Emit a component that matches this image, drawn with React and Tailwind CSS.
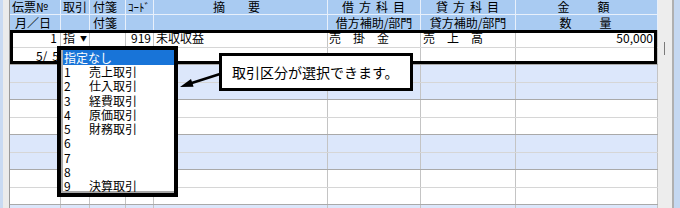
import React from 'react';

const W = [51, 29, 36, 28, 174, 93, 95, 142];

const items = [
  ['1', '売上取引'],
  ['2', '仕入取引'],
  ['3', '経費取引'],
  ['4', '原価取引'],
  ['5', '財務取引'],
  ['6', ''],
  ['7', ''],
  ['8', ''],
  ['9', '決算取引'],
];

function Cell({ w, className = '', children }) {
  return (
    <div style={{ width: w }} className={`shrink-0 h-full flex items-center border-r border-[#c4c4c4] overflow-hidden whitespace-nowrap ${className}`}>
      {children}
    </div>
  );
}

function HeadCell({ w, className = '', children }) {
  return (
    <div style={{ width: w }} className={`shrink-0 h-full flex items-center border-r border-[#e8f0fb] whitespace-nowrap ${className}`}>
      {children}
    </div>
  );
}

function Record({ blue, first }) {
  const bg = blue ? 'bg-[#dce7fb]' : 'bg-white';
  return (
    <div className={bg}>
      <div className="h-[17.5px] flex border-b border-[#d6d6d6]">
        <Cell w={W[0]} className="justify-end pr-[3px]">{first ? '1' : ''}</Cell>
        <Cell w={W[1]} className="pl-[2px] gap-[5px]">
          {first ? (<><span>指</span><span className="text-[7px]">▼</span></>) : ''}
        </Cell>
        <Cell w={W[2]} />
        <Cell w={W[3]} className="justify-end pr-[2px]">{first ? '919' : ''}</Cell>
        <Cell w={W[4]} className="pl-[2px]">{first ? '未収収益' : ''}</Cell>
        <Cell w={W[5]} className="pl-[1px]">{first ? '売　掛　金' : ''}</Cell>
        <Cell w={W[6]} className="pl-[2px]">{first ? '売　上　高' : ''}</Cell>
        <Cell w={W[7]} className="justify-end pr-[4px]">{first ? '50,000' : ''}</Cell>
      </div>
      <div className="h-[17.5px] flex border-b border-[#a9a9a9]">
        <Cell w={W[0]} className="justify-end pr-[1px]">
          {first ? (<><span>5/</span><span className="ml-[5px]">5</span></>) : ''}
        </Cell>
        <Cell w={W[1]} />
        <Cell w={W[2]} />
        <Cell w={W[3]} />
        <Cell w={W[4]} />
        <Cell w={W[5]} />
        <Cell w={W[6]} />
        <Cell w={W[7]} />
      </div>
    </div>
  );
}

export default function App() {
  return (
    <div className="relative w-[680px] h-[208px] overflow-hidden flex bg-white text-[12px] leading-none text-black font-['Noto_Sans_CJK_JP','Noto_Sans',sans-serif]">
      <div className="w-[10px] shrink-0 flex">
        <div className="w-[3px] bg-[#c9daf2]" />
        <div className="w-[6px] bg-[#ebebeb]" />
        <div className="w-[1px] bg-[#9a9a9a]" />
      </div>

      <div className="w-[648px] shrink-0 flex flex-col">
        <div className="bg-[#a9cbf2]">
          <div className="h-[15px] flex border-b border-[#e8f0fb]">
            <HeadCell w={W[0]} className="pl-[2px]">伝票№</HeadCell>
            <HeadCell w={W[1]} className="pl-[2px]">取引</HeadCell>
            <HeadCell w={W[2]} className="pl-[3px]">付箋</HeadCell>
            <HeadCell w={W[3]} className="pl-[2px] text-[11px]">ｺｰﾄﾞ</HeadCell>
            <HeadCell w={W[4]} className="justify-center gap-[23px] pr-[8px]"><span>摘</span><span>要</span></HeadCell>
            <HeadCell w={W[5]} className="justify-center tracking-[5px] pl-[4px]">借方科目</HeadCell>
            <HeadCell w={W[6]} className="justify-center tracking-[5px] pl-[4px]">貸方科目</HeadCell>
            <HeadCell w={W[7]} className="justify-center gap-[28px] pr-[6px]"><span>金</span><span>額</span></HeadCell>
          </div>
          <div className="h-[15px] flex">
            <HeadCell w={W[0]} className="pl-[5px]">月／日</HeadCell>
            <HeadCell w={W[1]} />
            <HeadCell w={W[2]} className="pl-[3px]">付箋</HeadCell>
            <HeadCell w={W[3]} />
            <HeadCell w={W[4]} />
            <HeadCell w={W[5]} className="justify-center">借方補助/部門</HeadCell>
            <HeadCell w={W[6]} className="justify-center">貸方補助/部門</HeadCell>
            <HeadCell w={W[7]} className="justify-center gap-[28px] pr-[2px]"><span>数</span><span>量</span></HeadCell>
          </div>
        </div>
        <Record first />
        <Record blue />
        <Record />
        <Record blue />
        <Record />
        <Record blue />
      </div>

      <div className="w-[22px] shrink-0 flex">
        <div className="w-[14px] bg-[#ededed] relative">
          <div className="absolute left-[6px] top-[42px] w-[1px] h-[13px] bg-[#7a7a7a]" />
        </div>
        <div className="w-[2px] bg-[#b0b0b0]" />
        <div className="w-[6px] bg-[#c5d8f1]" />
      </div>

      {/* selected record frame */}
      <div className="absolute left-[10px] top-[30px] w-[647px] h-[34px] border-[3px] border-black pointer-events-none" />

      {/* dropdown list */}
      <div className="absolute left-[57px] top-[46px] w-[121px] h-[151px] border-[4px] border-black bg-white">
        <div className="h-full border-l-[2px] border-b-[2px] border-[#a8a8a8]">
          <div className="h-[15px] bg-[#1874d8] text-white flex items-center pl-[1px]">指定なし</div>
          {items.map(([n, t]) => (
            <div key={n} className="h-[14.25px] flex items-center pl-[1px]">
              <span className="w-[25px] shrink-0">{n}</span>
              <span>{t}</span>
            </div>
          ))}
        </div>
      </div>

      {/* callout */}
      <div className="absolute left-[219px] top-[53px] w-[194px] h-[38px] border-[3px] border-black bg-white flex items-center pl-[10px] text-[14px]">
        取引区分が選択できます。
      </div>
      <svg className="absolute left-[170px] top-[65px]" width="55" height="30" viewBox="0 0 55 30">
        <line x1="50" y1="9" x2="21" y2="18.3" stroke="black" strokeWidth="2.5" />
        <polygon points="10,22 23.6,21.7 21,14.1" fill="black" />
      </svg>
    </div>
  );
}
